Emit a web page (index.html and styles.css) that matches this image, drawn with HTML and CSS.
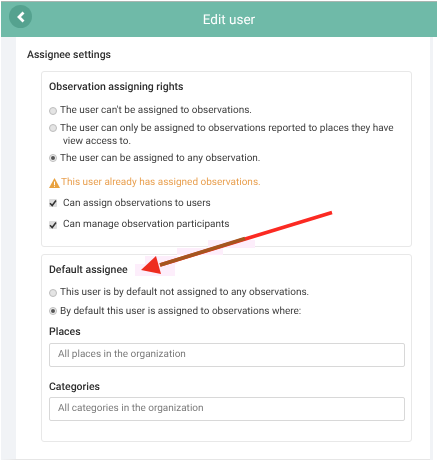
FILE: index.html
```html
<!DOCTYPE html>
<html lang="en">
<head>
<meta charset="utf-8">
<title>Edit user</title>
<link rel="stylesheet" href="styles.css">
</head>
<body>
<div class="page">
  <header class="topbar">
    <span class="back">
      <svg width="10" height="12" viewBox="0 0 10 12"><path d="M7.500 1.500 3 6l4.500 4.500" fill="none" stroke="#fff" stroke-width="2.800"/></svg>
    </span>
    <h1>Edit user</h1>
  </header>
  <main class="card">
    <h2>Assignee settings</h2>
    <section class="panel first">
      <h3>Observation assigning rights</h3>
      <div class="radio r1"><i class="dot"></i><span>The user can't be assigned to observations.</span></div>
      <div class="radio r2"><i class="dot"></i><span>The user can only be assigned to observations reported to places they have<br><em>view access to.</em></span></div>
      <div class="radio r3"><i class="dot on"></i><span>The user can be assigned to any observation.</span></div>
      <div class="warn">
        <svg width="11" height="10" viewBox="0 0 11 10"><path d="M5.500 0 11 10H0z" fill="#e9a23f"/><path d="M5 3.500h1V7H5zM5 7.800h1v1H5z" fill="#fff"/></svg>
        <span>This user already has assigned observations.</span>
      </div>
      <div class="check c1"><i class="box"><svg width="8" height="8" viewBox="0 0 8 8"><path d="M1 4.200 3.200 6.500 7 1.500" fill="none" stroke="#333" stroke-width="1.500"/></svg></i><span>Can assign observations to users</span></div>
      <div class="check c2"><i class="box"><svg width="8" height="8" viewBox="0 0 8 8"><path d="M1 4.200 3.200 6.500 7 1.500" fill="none" stroke="#333" stroke-width="1.500"/></svg></i><span>Can manage observation participants</span></div>
    </section>
    <section class="panel second">
      <h3>Default assignee</h3>
      <div class="radio r4"><i class="dot"></i><span>This user is by default not assigned to any observations.</span></div>
      <div class="radio r5"><i class="dot on"></i><span>By default this user is assigned to observations where:</span></div>
      <label class="field-label places">Places</label>
      <div class="input">All places in the organization</div>
      <label class="field-label cats">Categories</label>
      <div class="input">All categories in the organization</div>
    </section>
  </main>
  <svg class="arrow" width="437" height="466" viewBox="0 0 437 466">
    <path d="M208 240h47v8h-47zM177 248h46v7h-46zM145 256h32v8h-32zM135 264h40v12h-40z" fill="#fdeefb"/>
    <path d="M332 212.500 160 265" fill="none" stroke="#fb2a22" stroke-width="3.500"/>
    <path d="M245 238.500 160 265" fill="none" stroke="#a4561f" stroke-width="3.500"/>
    <path d="M141 270 156 256 161 274z" fill="#ee2c1f"/>
  </svg>
</div>
</body>
</html>
```
FILE: styles.css
```css
* { box-sizing: border-box; }
html, body { margin: 0; padding: 0; background: #fff; }
body { font-family: Roboto, "Liberation Sans", sans-serif; color: #3d3d3d; text-rendering: geometricPrecision; }
.page { position: relative; width: 437px; height: 466px; overflow: hidden; padding: 1px 0 0 1px; background: #fff; filter: blur(0.35px); }
.topbar { height: 36px; background: #6fbaa8; display: flex; align-items: center; justify-content: center; position: relative; border-top: 1px solid #a9b5b0; }
.topbar h1 { margin: 0; font-size: 13.500px; font-weight: 400; color: #fff; padding-left: 20px; }
.back { position: absolute; left: 8px; top: 3px; width: 23px; height: 23px; border-radius: 50%; background: #55a28f; display: flex; align-items: center; justify-content: center; }
.card { width: 429px; height: 423px; background: #fff; padding: 11px 15px 0 26px; border-left: 15px solid #f1f3f6; border-bottom: 1px solid #e6e6e6; box-shadow: 3px 0 0 #f1f3f6; }
h2, h3 { margin: 0; font-size: 10.500px; font-weight: 500; color: #2e2e2e; line-height: 14px; }
h2 { margin-left: -15px; }
.panel { width: 371px; border: 1px solid #e8e8e8; border-radius: 3px; padding: 8px 7px 0; margin-left: -1px; }
.first { height: 176px; margin-top: 9px; }
.second { height: 188px; margin-top: 7px; }
.radio { display: flex; align-items: flex-start; font-size: 10px; line-height: 13px; }
.r1 { margin-top: 10px; }
.r2 { margin-top: 4.500px; }
.r3 { margin-top: 4px; }
.r4 { margin-top: 9px; }
.r5 { margin-top: 5.500px; }
.radio span { margin-left: 3px; }
.radio em { font-style: normal; margin-left: 3px; }
.dot { flex: none; width: 8px; height: 8px; margin-top: 2.500px; border-radius: 50%; background: #e4e4e4; border: 1px solid #bdbdbd; position: relative; }
.dot.on { background: #efefef; }
.dot.on::after { content: ""; position: absolute; left: 1px; top: 1px; width: 4px; height: 4px; border-radius: 50%; background: #555; }
.warn { display: flex; align-items: center; gap: 1px; margin-top: 11px; height: 14px; color: #e9a050; font-size: 10px; }
.check { display: flex; align-items: center; height: 14px; font-size: 10px; }
.c1 { margin-top: 6.500px; }
.c2 { margin-top: 7.500px; }
.box { flex: none; width: 8px; height: 8px; background: #dcdcdc; border-radius: 1px; display: flex; align-items: center; justify-content: center; margin-right: 6px; }
.field-label { display: block; font-size: 10.500px; font-weight: 500; color: #2e2e2e; line-height: 14px; }
.places { margin-top: 7.500px; }
.cats { margin-top: 13px; }
.input { height: 24px; margin: 3.500px 0 0; width: 356px; border: 1px solid #d8d8d8; border-radius: 2px; padding: 0 8px; font-size: 10px; line-height: 22px; color: #7b7b7b; }
.arrow { position: absolute; left: 0; top: 0; pointer-events: none; }
```
